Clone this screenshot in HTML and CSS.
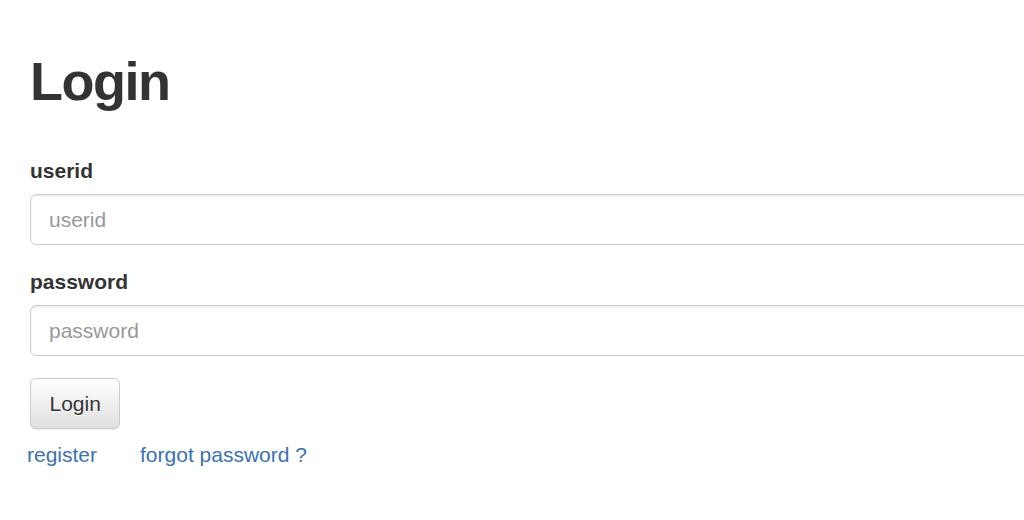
FILE: index.html
```html
<!DOCTYPE html>
<html>
<head>
<meta charset="utf-8">
<title>Login</title>
<link rel="stylesheet" href="styles.css">
</head>
<body>
<div class="container">
  <h1 class="title">Login</h1>
  <form class="login-form">
    <div class="form-group">
      <label class="field-label" for="userid">userid</label>
      <input class="field-input" id="userid" type="text" placeholder="userid">
    </div>
    <div class="form-group">
      <label class="field-label" for="password">password</label>
      <input class="field-input" id="password" type="password" placeholder="password">
    </div>
    <button class="btn" type="button">Login</button>
  </form>
  <div class="links">
    <a class="link" href="#">register</a>
    <a class="link" href="#">forgot password ?</a>
  </div>
</div>
</body>
</html>
```
FILE: styles.css
```css
html, body {
  margin: 0;
  padding: 0;
  overflow: hidden;
  background: #fff;
}
body {
  font-family: "Liberation Sans", Arial, Helvetica, sans-serif;
  font-size: 21px;
  line-height: 30px;
  color: #333;
}
.container {
  padding: 52px 0 0 30px;
  width: 1040px;
}
.title {
  margin: 0 0 45px 0;
  font-size: 54px;
  line-height: 59.4px;
  font-weight: bold;
  letter-spacing: -1.5px;
  color: #333;
}
.form-group {
  margin-bottom: 22px;
}
.field-label {
  display: block;
  font-weight: bold;
  line-height: 30px;
  margin-bottom: 8px;
}
.field-input {
  display: block;
  box-sizing: border-box;
  width: 100%;
  height: 51px;
  padding: 9px 18px;
  font-family: inherit;
  font-size: 21px;
  color: #555;
  background: #fff;
  border: 1px solid #ccc;
  border-radius: 6px;
  box-shadow: inset 0 1.5px 1.5px rgba(0,0,0,0.075);
  outline: none;
}
.field-input::placeholder {
  color: #999;
}
.btn {
  display: block;
  box-sizing: border-box;
  height: 51px;
  margin-top: 2px;
  padding: 9px 18.5px;
  font-family: inherit;
  font-size: 21px;
  line-height: 30px;
  color: #333;
  background-image: linear-gradient(to bottom, #fff 0%, #e0e0e0 100%);
  border: 1px solid #ccc;
  border-radius: 6px;
  text-shadow: 0 1px 0 #fff;
  box-shadow: inset 0 1px 0 rgba(255,255,255,0.15), 0 1px 1px rgba(0,0,0,0.075);
}
.links {
  display: flex;
  gap: 43px;
  margin-top: 11px;
  margin-left: -3px;
}
.link {
  color: #3a72b0;
  text-decoration: none;
}
```
